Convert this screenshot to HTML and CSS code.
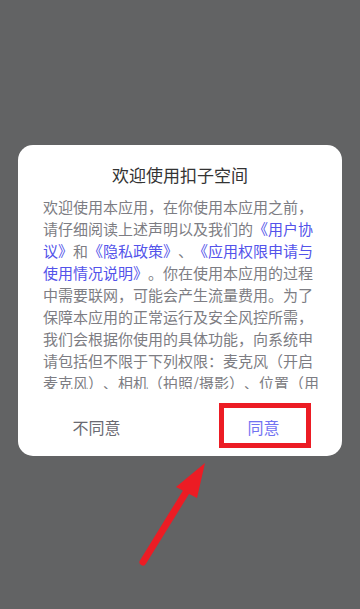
FILE: index.html
```html
<!DOCTYPE html>
<html lang="zh-CN">
<head>
<meta charset="utf-8">
<title>欢迎使用扣子空间</title>
<link rel="stylesheet" href="styles.css">
</head>
<body>
<div class="screen">
  <div class="dialog">
    <h1 class="title">欢迎使用扣子空间</h1>
    <div class="content">
      <p class="text">欢迎使用本应用，在你使用本应用之前，请仔细阅读上述声明以及我们的<a class="link">《用户协议》</a>和<a class="link">《隐私政策》</a>、<a class="link">《应用权限申请与使用情况说明》</a>。你在使用本应用的过程中需要联网，可能会产生流量费用。为了保障本应用的正常运行及安全风控所需，我们会根据你使用的具体功能，向系统申请包括但不限于下列权限：麦克风（开启麦克风）、相机（拍照/摄影）、位置（用于定位服务）等。</p>
    </div>
    <div class="actions">
      <button class="btn btn-cancel">不同意</button>
      <button class="btn btn-ok">同意</button>
      <span class="highlight"></span>
    </div>
  </div>
  <svg class="arrow" width="360" height="609" viewBox="0 0 360 609">
    <line x1="143" y1="562" x2="188" y2="489" stroke="#ec1c24" stroke-width="7" stroke-linecap="round"/>
    <polygon points="205,463 176,487 197,498" fill="#ec1c24"/>
  </svg>
</div>
</body>
</html>
```
FILE: styles.css
```css
* { box-sizing: border-box; }
html, body {
  margin: 0;
  padding: 0;
}
body {
  background: #626364;
  font-family: "Noto Sans CJK SC", "Noto Sans", sans-serif;
}
.screen {
  position: relative;
  width: 360px;
  height: 609px;
  padding: 145px 18px 0;
  overflow: hidden;
}
.dialog {
  position: relative;
  width: 324px;
  height: 311px;
  background: #ffffff;
  border-radius: 15px;
  padding: 18px 0 0;
  display: flex;
  flex-direction: column;
}
.title {
  margin: 0;
  font-size: 17px;
  line-height: 24px;
  font-weight: 400;
  color: #333333;
  text-align: center;
}
.content {
  margin-top: 9px;
  height: 193px;
  overflow: hidden;
  padding: 0 0 0 25px;
}
.text {
  margin: 0;
  width: 281px;
  font-size: 15px;
  line-height: 22px;
  color: #7d7d83;
  text-spacing-trim: space-all;
  text-align: left;
}
.link {
  color: #5353ea;
  text-decoration: none;
}
.actions {
  position: relative;
  margin-top: 14px;
  height: 48px;
  display: flex;
}
.btn {
  flex: 1;
  border: 0;
  background: transparent;
  font-family: inherit;
  font-size: 16px;
  line-height: 48px;
  padding: 0;
}
.btn-cancel {
  color: #6a6a72;
  padding-right: 6px;
}
.btn-ok {
  color: #7272f2;
  padding-left: 4px;
}
.highlight {
  position: absolute;
  left: 201px;
  top: 0;
  width: 92px;
  height: 45px;
  border: 5.5px solid #ec1c24;
}
.arrow {
  position: absolute;
  left: 0;
  top: 0;
  pointer-events: none;
}
```
